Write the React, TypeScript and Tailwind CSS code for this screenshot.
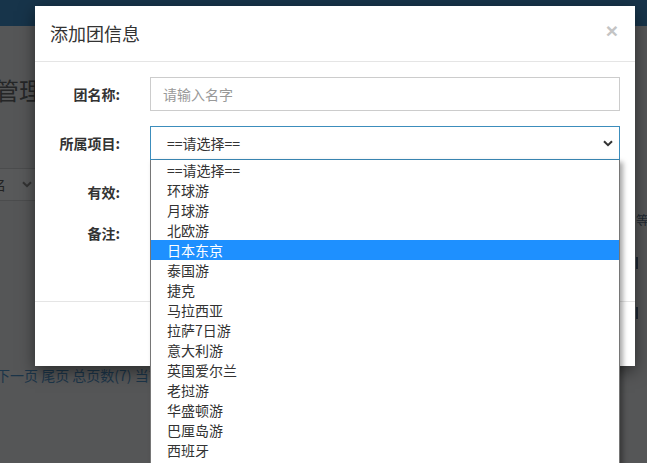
import React from 'react';

const projects = [
  '==请选择==',
  '环球游',
  '月球游',
  '北欧游',
  '日本东京',
  '泰国游',
  '捷克',
  '马拉西亚',
  '拉萨7日游',
  '意大利游',
  '英国爱尔兰',
  '老挝游',
  '华盛顿游',
  '巴厘岛游',
  '西班牙',
  '葡萄牙',
];

const selected = '日本东京';

const Chevron: React.FC = () => (
  <svg width="10" height="7" viewBox="0 0 10 7" fill="none">
    <path d="M1 1.2 L5 5.2 L9 1.2" stroke="#333" strokeWidth="2" />
  </svg>
);

const App: React.FC = () => {
  return (
    <div
      className="relative w-[647px] h-[463px] overflow-hidden bg-[#555657]"
      style={{ fontFamily: '"Noto Sans CJK SC", "Noto Sans", sans-serif' }}
    >
      {/* page behind the backdrop */}
      <div className="h-[26px] bg-[#17344a]" />
      <div className="relative pt-[48px]">
        <div className="ml-[-5px] text-[24px] leading-[32px] text-[#252627]">管理</div>
        <div className="mt-[62px] flex h-[33px] w-[40px] items-center justify-between border-y border-[#4b4c4d] bg-[#58595a] pr-[8px]">
          <span className="ml-[-8px] text-[14px] text-[#222]">名</span>
          <Chevron />
        </div>
        <div className="absolute left-[636px] top-[187px] w-[11px] overflow-hidden text-[13px] leading-none text-[#1e2833]">等</div>
        <div className="absolute left-[636px] top-[231px] h-[12px] w-[3px] border-l-2 border-[#1e2833]" />
        <div className="absolute left-[636px] top-[281px] h-[12px] w-[3px] border-l-2 border-[#1e2833]" />
        <div className="mt-[164px] ml-[-4px] whitespace-nowrap text-[14px] leading-[20px] text-[#1c3549]">
          下一页 尾页 总页数(7) 当前页(1)
        </div>
      </div>

      {/* modal */}
      <div className="absolute left-[35px] top-[6px] flex h-[360px] w-[600px] flex-col bg-white shadow-[0_5px_15px_rgba(0,0,0,0.5)]">
        <div className="flex h-[56px] items-center justify-between border-b border-[#e5e5e5] px-[15px]">
          <h4 className="text-[18px] font-normal text-[#333]">添加团信息</h4>
          <span
            className="mr-[2px] mt-[-6px] text-[21px] font-bold leading-none text-[#c4c4c4]"
            style={{ fontFamily: '"Liberation Sans", Arial, sans-serif' }}
          >
            ×
          </span>
        </div>
        <div className="flex flex-col gap-[15px] px-[15px] pt-[15px]">
          <div className="flex items-center">
            <label className="w-[100px] pr-[30px] text-right text-[14px] font-bold text-[#333]">团名称:</label>
            <div className="flex h-[34px] w-[470px] items-center border border-[#ccc] px-[12px] text-[14px] text-[#999]">
              请输入名字
            </div>
          </div>
          <div className="flex items-center">
            <label className="w-[100px] pr-[30px] text-right text-[14px] font-bold text-[#333]">所属项目:</label>
            <div className="flex h-[34px] w-[470px] items-center justify-between border border-[#3c8dbc] pl-[16px] pr-[6px] text-[14px] text-[#333]">
              ==请选择==
              <Chevron />
            </div>
          </div>
          <div className="flex h-[34px] items-center">
            <label className="w-[100px] pr-[30px] text-right text-[14px] font-bold text-[#333]">有效:</label>
          </div>
          <div className="flex h-[62px] items-start">
            <label className="mt-[-1px] w-[100px] pr-[30px] text-right text-[14px] font-bold text-[#333]">备注:</label>
          </div>
        </div>
        <div className="mt-[15px] flex-1 border-t border-[#e5e5e5]" />
      </div>

      {/* open native-style dropdown list */}
      <ul className="absolute left-[150px] top-[160px] w-[470px] border-x border-[#767676] bg-white shadow-[3px_2px_5px_rgba(0,0,0,0.35)]">
        {projects.map((p) => (
          <li
            key={p}
            className={`h-[20px] pl-[16px] text-[14px] leading-[20px] ${
              p === selected ? 'bg-[#1e90ff] text-white' : 'text-[#333]'
            }`}
          >
            {p}
          </li>
        ))}
      </ul>
    </div>
  );
};

export default App;
